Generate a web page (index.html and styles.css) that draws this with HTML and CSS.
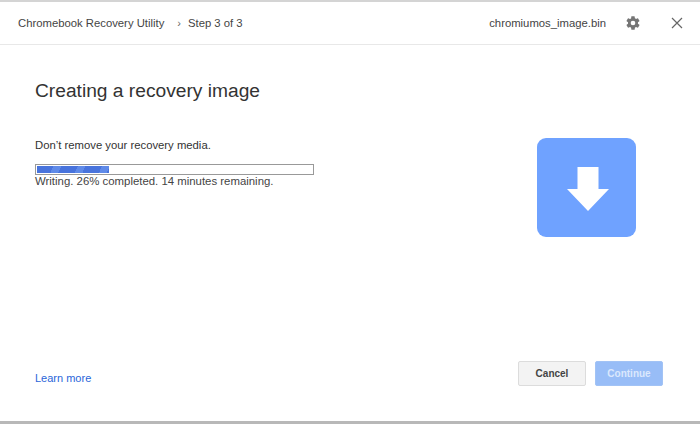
FILE: index.html
```html
<!DOCTYPE html>
<html lang="en">
<head>
<meta charset="utf-8">
<title>Chromebook Recovery Utility</title>
<link rel="stylesheet" href="styles.css">
</head>
<body>
<div class="window">
  <header class="titlebar">
    <div class="crumbs"><span>Chromebook Recovery Utility</span><span class="sep">›</span><span>Step 3 of 3</span></div>
    <div class="tools">
      <span class="file">chromiumos_image.bin</span>
      <svg class="gear" viewBox="0 0 24 24" width="16" height="16"><path fill="#757575" d="M19.4 13c.04-.32.07-.66.07-1s-.03-.68-.07-1l2.1-1.65c.2-.15.25-.42.12-.64l-2-3.46c-.12-.22-.39-.3-.61-.22l-2.49 1c-.52-.4-1.08-.73-1.69-.98l-.38-2.65A.49.49 0 0 0 14 2h-4c-.25 0-.46.18-.49.42l-.38 2.65c-.61.25-1.17.59-1.69.98l-2.49-1c-.23-.09-.49 0-.61.22l-2 3.46c-.13.22-.07.49.12.64L4.57 11c-.04.32-.07.66-.07 1s.03.68.07 1l-2.11 1.65c-.19.15-.24.42-.12.64l2 3.46c.12.22.39.3.61.22l2.49-1c.52.4 1.08.73 1.69.98l.38 2.65c.03.24.24.42.49.42h4c.25 0 .46-.18.49-.42l.38-2.65c.61-.25 1.17-.59 1.69-.98l2.49 1c.23.09.49 0 .61-.22l2-3.46c.12-.22.07-.49-.12-.64L19.4 13zM12 15.5a3.5 3.5 0 1 1 0-7 3.5 3.5 0 0 1 0 7z"/></svg>
      <svg class="close" viewBox="0 0 12 12" width="12" height="12"><path d="M1 1l10 10M11 1L1 11" stroke="#666" stroke-width="1.2" fill="none"/></svg>
    </div>
  </header>
  <main class="content">
    <div class="upper">
      <div class="left">
        <h1>Creating a recovery image</h1>
        <p class="note">Don’t remove your recovery media.</p>
        <div class="progress"><div class="bar"></div></div>
        <p class="status">Writing. 26% completed. 14 minutes remaining.</p>
      </div>
      <div class="tile">
        <svg viewBox="0 0 42 44" width="42" height="44"><path fill="#fff" d="M10.5 0h21v22H42L21 44 0 22h10.5z"/></svg>
      </div>
    </div>
    <footer class="actions">
      <a class="learn" href="#">Learn more</a>
      <div class="buttons">
        <button class="btn cancel">Cancel</button>
        <button class="btn continue">Continue</button>
      </div>
    </footer>
  </main>
</div>
</body>
</html>
```
FILE: styles.css
```css
* { box-sizing: border-box; }
html, body { margin: 0; padding: 0; }
body {
  width: 700px;
  height: 424px;
  background: #fff;
  font-family: "Liberation Sans", Arial, sans-serif;
  color: #333;
  overflow: hidden;
}
.window {
  width: 700px;
  height: 424px;
  display: flex;
  flex-direction: column;
  border-top: 2px solid #d4d4d4;
  border-bottom: 3px solid #b8b8b8;
}
.titlebar {
  height: 43px;
  flex: none;
  display: flex;
  align-items: center;
  justify-content: space-between;
  padding: 0 17px 0 18px;
  border-bottom: 1px solid #e8e8e8;
  font-size: 11.3px;
  color: #444;
}
.crumbs { display: flex; align-items: center; }
.sep { margin: 0 7px 0 13px; color: #666; font-size: 11px; }
.tools { display: flex; align-items: center; }
.gear { margin-left: 19px; }
.close { margin-left: 30px; }
.content {
  flex: 1;
  display: flex;
  flex-direction: column;
  justify-content: space-between;
  padding: 0 37px 35px 35px;
}
.upper { display: flex; justify-content: space-between; }
.left { width: 279px; }
h1 {
  margin: 34px 0 0;
  font-size: 19.2px;
  line-height: 24px;
  font-weight: 400;
  color: #333;
  white-space: nowrap;
}
.note { margin: 35px 0 0; font-size: 11.3px; line-height: 14px; color: #333; }
.progress {
  margin-top: 12px;
  width: 279px;
  height: 11px;
  border: 1px solid #999;
  padding: 1px;
  background: #fff;
}
.bar {
  width: 72px;
  height: 7px;
  background: repeating-linear-gradient(115deg, #4873dc 0 15px, #5f8ae8 15px 22px);
}
.status { margin: 0; font-size: 11.4px; line-height: 13px; color: #444; white-space: nowrap; }
.tile {
  margin: 93px 27px 0 0;
  width: 99px;
  height: 99px;
  border-radius: 9px;
  background: #6fa2ff;
  display: flex;
  align-items: center;
  justify-content: center;
}
.tile svg { position: relative; left: 1px; top: 1px; }
.actions { display: flex; justify-content: space-between; align-items: center; }
.learn { font-size: 11px; color: #2a66d9; text-decoration: none; position: relative; top: 4px; }
.buttons { display: flex; gap: 9px; }
.btn {
  width: 68px;
  height: 25px;
  border-radius: 2px;
  font-family: inherit;
  font-size: 10px;
  font-weight: 700;
  padding: 0;
}
.cancel { background: #f3f3f3; border: 1px solid #dcdcdc; color: #444; }
.continue { background: #98bdf7; border: 1px solid #a2c3f5; color: #dbe8fd; }
```
